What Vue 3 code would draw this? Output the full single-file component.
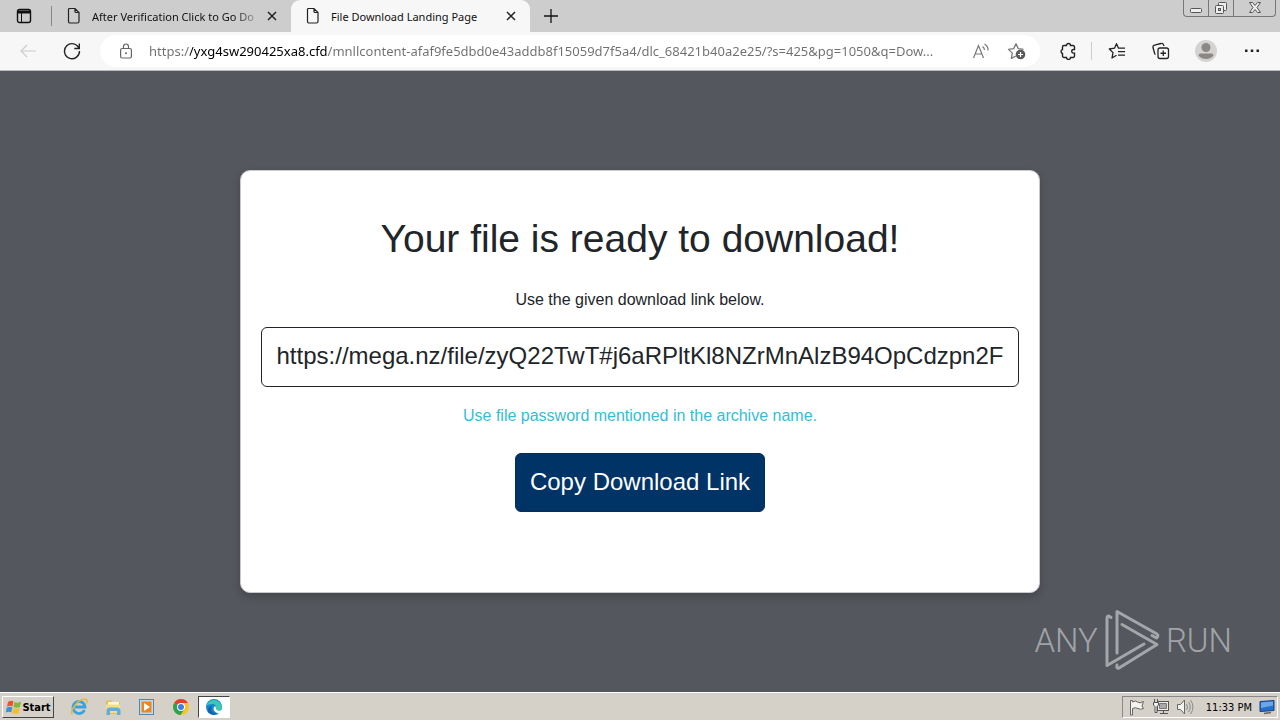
<script setup>
import { ref } from 'vue'

const tabs = [
  { title: 'After Verification Click to Go Do', active: false },
  { title: 'File Download Landing Page', active: true },
]
const address = ref('https://yxg4sw290425xa8.cfd/mnllcontent-afaf9fe5dbd0e43addb8f15059d7f5a4/dlc_68421b40a2e25/?s=425&pg=1050&q=Dow...')
const link = ref('https://mega.nz/file/zyQ22TwT#j6aRPltKl8NZrMnAlzB94OpCdzpn2F')
</script>

<template>
  <div class="desktop">
    <header class="tabstrip">
      <button class="tab-actions" aria-label="Tab actions">
        <svg width="16" height="16" viewBox="0 0 16 16"><rect x="1.5" y="1.500" width="13" height="13" rx="2" fill="none" stroke="#111" stroke-width="1.4" /><path d="M1.500 2.500h13v3h-13z" fill="#111" /><path d="M5.500 5v9" stroke="#111" /></svg>
      </button>
      <div v-for="tab in tabs" :key="tab.title" class="tab" :class="{ active: tab.active }">
        <svg class="doc" width="14" height="18" viewBox="0 0 14 18"><path d="M2.500 1.500h5.500l4 4v9a1.500 1.500 0 0 1-1.500 1.500h-8A1.500 1.500 0 0 1 1.500 14.500v-12a1 1 0 0 1 1-1zM8 1.500v3a1 1 0 0 0 1 1h3" fill="none" stroke="#222" stroke-width="1.200" /></svg>
        <span class="title">{{ tab.title }}</span>
        <button class="close" aria-label="Close tab"><svg width="10" height="10" viewBox="0 0 10 10"><path d="M1 1l8 8M9 1l-8 8" stroke="#222" stroke-width="1.500" /></svg></button>
      </div>
      <button class="new-tab" aria-label="New tab"><svg width="14" height="14" viewBox="0 0 14 14"><path d="M7 0v14M0 7h14" stroke="#111" stroke-width="1.300" /></svg></button>
      <div class="window-buttons">
        <button aria-label="Minimize"><svg width="14" height="14" viewBox="0 0 14 14"><rect x="1.500" y="7.500" width="11" height="4" rx="1" fill="#eee" stroke="#555" /></svg></button>
        <button aria-label="Restore"><svg width="14" height="14" viewBox="0 0 14 14"><rect x="4.500" y="1.500" width="8" height="8" rx="1" fill="#eee" stroke="#555" /><rect x="1.500" y="4.500" width="8" height="8" rx="1" fill="#eee" stroke="#555" /><rect x="4.500" y="7.500" width="2" height="2" fill="#ccc" stroke="#555" /></svg></button>
        <button class="wide" aria-label="Close"><svg width="14" height="14" viewBox="0 0 14 14"><path d="M1.500 1.500h3L7 4.500l2.500-3h3L9 6.500l3.500 5h-3L7 8.500l-2.500 3h-3L5 6.500z" fill="#eee" stroke="#555" /></svg></button>
      </div>
    </header>

    <nav class="toolbar">
      <button class="tool" aria-label="Back"><svg width="18" height="14" viewBox="0 0 18 14"><path d="M17 7H2M8 1L2 7l6 6" fill="none" stroke="#ccc" stroke-width="1.200" /></svg></button>
      <button class="tool" aria-label="Reload"><svg width="18" height="18" viewBox="0 0 18 18"><path d="M16 6.500A7.500 7.500 0 1 0 16.500 9M16.300 1.500v5h-5" fill="none" stroke="#222" stroke-width="1.400" /></svg></button>
      <div class="address">
        <svg width="12" height="16" viewBox="0 0 12 16"><rect x=".6" y="5.500" width="10.800" height="9.500" rx="1.500" fill="none" stroke="#666" stroke-width="1.200" /><path d="M3.500 5.500V3.500a2.500 2.500 0 0 1 5 0v2" fill="none" stroke="#666" stroke-width="1.200" /><circle cx="6" cy="10.300" r="1" fill="#666" /></svg>
        <input v-model="address" class="url" aria-label="Address" spellcheck="false" />
        <button aria-label="Read aloud"><svg width="18" height="16" viewBox="0 0 18 16"><path d="M1.500 15L6.500 2.500l5 12.500M3 11h7M10.500 3.500q2 1.500 2 3.500M12.500 1q4 2.500 3.500 6.500" fill="none" stroke="#777" stroke-width="1.200" /></svg></button>
        <button aria-label="Add to favorites"><svg width="20" height="18" viewBox="0 0 20 18"><path d="M9 14l-4.600 2.400.9-5.300L1.500 7.400l5.200-.8L9 1.800l2.300 4.800 5.200.8" fill="none" stroke="#777" stroke-width="1.300" stroke-linejoin="round" /><circle cx="13.500" cy="12.500" r="4.800" fill="#5a5a5a" /><path d="M13.500 10v5M11 12.500h5" stroke="#fff" stroke-width="1.200" /></svg></button>
      </div>
      <button class="tool ext" aria-label="Extensions"><svg width="18" height="18" viewBox="0 0 18 18"><path d="M5 3.500h2.500a2 2 0 0 1 4 0H14a1.500 1.500 0 0 1 1.500 1.500v2.500h-1a1.800 1.800 0 0 0 0 3.600h1V14a1.500 1.500 0 0 1-1.500 1.500h-2.500a2 2 0 0 1-4 0H5A1.500 1.500 0 0 1 3.500 14v-2.500a2.100 2.100 0 0 1 0-4V5A1.500 1.500 0 0 1 5 3.500z" fill="none" stroke="#222" stroke-width="1.400" /></svg></button>
      <span class="divider"></span>
      <button class="tool" aria-label="Favorites"><svg width="18" height="18" viewBox="0 0 18 18"><path d="M8.500 13.200L4 16l1-5.400L1.300 7l5.200-.8L8.500 1.700l2 4.500H17M10 9.700h7M10 13.200h7" fill="none" stroke="#222" stroke-width="1.300" stroke-linejoin="round" /></svg></button>
      <button class="tool" aria-label="Collections"><svg width="18" height="18" viewBox="0 0 18 18"><rect x="6" y="6" width="10.500" height="10.500" rx="2" fill="none" stroke="#222" stroke-width="1.300" /><path d="M11.250 8.500v5.500M8.500 11.250H14M3.500 12.500A2 2 0 0 1 2.500 11L1 5.500A2 2 0 0 1 2.500 3.200L9 1.500a2 2 0 0 1 2.500 1.300L12 4" fill="none" stroke="#222" stroke-width="1.300" /></svg></button>
      <button class="tool person" aria-label="Profile"><svg width="22" height="22" viewBox="0 0 22 22"><circle cx="11" cy="11" r="11" fill="#d5d3d1" /><circle cx="11" cy="7.500" r="4.500" fill="#8b8886" /><path d="M3.500 15.500q0-2 2-2h11q2 0 2 2a8.500 6.500 0 0 1-15 0z" fill="#8b8886" /></svg></button>
      <button class="tool person" aria-label="Settings and more"><svg width="16" height="4" viewBox="0 0 16 4"><path d="M1 .5h2.500v2.500H1zM6.750 .5h2.500v2.500h-2.500zM12.500 .5H15v2.500h-2.500z" fill="#222" /></svg></button>
    </nav>

    <main class="page">
      <section class="card">
        <h1>Your file is ready to download!</h1>
        <label for="link">Use the given download link below.</label>
        <input id="link" v-model="link" class="link" readonly />
        <p>Use file password mentioned in the archive name.</p>
        <button class="copy">Copy Download Link</button>
      </section>
      <div class="watermark">
        <span>ANY</span>
        <svg width="56" height="62" viewBox="0 0 56 62"><g fill="none" stroke="#a3a7aa" stroke-width="3" stroke-linejoin="round" stroke-linecap="round"><path d="M7 8.500Q3 5 3 10v46.500L40 35" /><path d="M13 44V2.500L53 25q2 2-.5 4L48 26.500" /><path d="M18 15.500L53 35.500 15 59q-3 1-2-3" /></g></svg>
        <span>RUN</span>
      </div>
    </main>

    <footer class="taskbar">
      <button class="start">
        <svg width="17" height="16" viewBox="0 0 17 16"><path d="M3 3q3-2 5.500-.5L7.500 7.500Q5 6 2 7.500z" fill="#e8562a" /><path d="M9.500 3Q13 4.500 16 2.500L15 8q-3 1.500-6.500 0z" fill="#7eb93c" /><path d="M1.800 8.500q3-1.500 5.500 0L6.300 13.500Q4 12 .8 13.500z" fill="#3c8fdd" /><path d="M8.300 9q3.500 1.500 6.500 0l-1 5q-3 2-6.500 0z" fill="#f5bf27" /></svg>
        Start
      </button>
      <div class="launchers">
        <button aria-label="Internet Explorer"><svg width="18" height="18" viewBox="0 0 18 18"><path d="M14.500 12A6 6 0 1 1 15 9H5" fill="none" stroke="#36a5df" stroke-width="2.800" /><path d="M2.500 16.500C-1 13 9-.5 16 1.500q2 1 .5 4" fill="none" stroke="#e6b83b" stroke-width="1.500" /></svg></button>
        <button aria-label="File Explorer"><svg width="18" height="18" viewBox="0 0 18 18"><path d="M2 3l5-1 1 2h8v12H2z" fill="#dfbf5b" /><path d="M4 4h11v3H4z" fill="#fff8cf" /><path d="M2 6.500h14V15H2z" fill="#f3dc8b" /><path d="M2.500 17v-4q0-3.500 3.500-3.500h7q3.500 0 3.500 3.500v4h-3.500v-4H6v4z" fill="#62aeda" /></svg></button>
        <button aria-label="Media Player"><svg width="18" height="18" viewBox="0 0 18 18"><rect x="1.500" y="1.500" width="14" height="15" fill="#bfdcf1" stroke="#4689bd" /><rect x="3.500" y="3.500" width="10" height="11" fill="#ef8519" /><path d="M6 5l6 4-6 4z" fill="#fff" /></svg></button>
        <button aria-label="Chrome"><svg width="18" height="18" viewBox="0 0 18 18"><circle cx="9" cy="9" r="8" fill="#f7c51e" /><path d="M9 9L2.100 5A8 8 0 0 1 16 5H9z" fill="#df4034" /><path d="M9 9L2.100 5A8 8 0 0 0 8.500 17L12.500 11z" fill="#2ca34c" /><circle cx="9" cy="9" r="4" fill="#fff" /><circle cx="9" cy="9" r="3" fill="#3f7de8" /></svg></button>
        <button class="pressed" aria-label="Edge"><svg width="18" height="18" viewBox="0 0 18 18"><circle cx="9" cy="9" r="8" fill="#1687cf" /><path d="M1.300 8A8 8 0 0 1 17 9q0 3.500-4 3.500-3 0-2.500-2Q12 6 7.500 6 3 6 1.300 8z" fill="#3fc6b0" /><path d="M7 8q-3 7 5 8A8 8 0 0 1 3 14Q2 9 7 8z" fill="#1761a9" /><path d="M9 8.500q1.500-.5 2 1-1 2 2 3 3 .5 5-1v2.500q-3 2-6 1Q7.500 13 9 8.500z" fill="#fff" /></svg></button>
      </div>
      <div class="tray">
        <svg width="18" height="18" viewBox="0 0 18 18"><path d="M2.500 17V2.500h2V4q3-2 5 0t6-.5L14 8l1.500 2.500q-3 1.500-5.500 0t-5.500 0V17z" fill="#f4f3ee" stroke="#666" /></svg>
        <svg width="18" height="18" viewBox="0 0 18 18"><rect x="5.500" y="3.500" width="11" height="9" fill="#eee" stroke="#555" /><path d="M7.500 5.500h7v5h-7z" fill="#aaa" stroke="#777" /><path d="M8 15.500h8M11.500 13v2" fill="none" stroke="#555" /><path d="M2.500 1v3M5.500 1v3M1.500 4.500h5V7L5 8.500v6H3v-6L1.500 7z" fill="#f4f3ee" stroke="#555" /></svg>
        <svg width="18" height="18" viewBox="0 0 18 18"><path d="M1.500 6.500h3l4-4.500v14l-4-4.500h-3z" fill="#f4f3ee" stroke="#666" /><path d="M10.500 6q2 3 0 6M12.500 4q3.500 5 0 10M14.500 2q5 7 0 14" fill="none" stroke="#888" /></svg>
        <time>11:33 PM</time>
        <svg width="18" height="16" viewBox="0 0 18 16"><path d="M2 2.500l14-1v10l-14 1z" fill="#2870c7" stroke="#153f83" /><path d="M3 3.500l12-1v4L3 9z" fill="#6aa7e8" /><path d="M6 14.500l7-1" stroke="#666" stroke-width="1.500" /></svg>
      </div>
    </footer>
  </div>
</template>

<style>
html, body, #app { height: 100%; }
body { margin: 0; overflow: hidden; }
</style>

<style scoped>
.desktop { display: flex; flex-direction: column; height: 100%; font-family: "Noto Sans", "Open Sans", sans-serif; color: #111; }
* { box-sizing: border-box; }
button { display: flex; align-items: center; justify-content: center; padding: 0; border: 0; background: none; font: inherit; color: inherit; }
svg { display: block; flex: none; }
.tabstrip { display: flex; flex: none; height: 32px; background: #cdcdcd; }
.tab-actions { width: 52px; padding-right: 4px; position: relative; }
.tab-actions::after { content: ""; position: absolute; right: 0; top: 6px; width: 1px; height: 20px; background: #888; }
.tab { display: flex; align-items: center; width: 239px; padding: 0 14px 0 15px; font-size: 11px; }
.tab.active { background: #f7f7f7; border-radius: 9px 9px 0 0; }
.title { flex: 1; min-width: 0; margin: 0 5px 0 11px; overflow: hidden; white-space: nowrap; }
.tab:not(.active) .title { mask-image: linear-gradient(to right, #000 84%, transparent); }
.close { width: 10px; height: 10px; }
.new-tab { width: 42px; }
.window-buttons { display: flex; height: 17px; margin: 0 4px 0 auto; border: 1px solid #777; border-top: 0; border-radius: 0 0 4px 4px; overflow: hidden; }
.window-buttons button { width: 25px; border-right: 1px solid #777; }
.window-buttons .wide { width: 41px; border: 0; }
.toolbar { display: flex; align-items: center; flex: none; height: 39px; padding: 0 5px 0 6px; background: #f7f7f7; border-bottom: 1px solid #bbb; }
.tool { width: 44px; height: 32px; }
.address { display: flex; align-items: center; flex: 1; min-width: 0; height: 32px; margin: 0 6px; padding: 0 5px 0 20px; border-radius: 16px; background: #fff; }
.url { flex: 1; min-width: 0; margin-left: 17px; padding: 0; border: 0; outline: 0; font: 13px "Noto Sans", "Open Sans", sans-serif; color: transparent; background: linear-gradient(to right, #6f6f6f 41px, #000 41px, #000 178px, #6f6f6f 178px); background-clip: text; }
.address button { width: 36px; height: 32px; }
.divider { width: 1px; height: 18px; margin: 0 3px 0 1px; background: #ccc; }
.person { width: 46px; }
.page { position: relative; display: flex; flex: 1; min-height: 0; align-items: flex-start; justify-content: center; padding-top: 99px; background: #54575d; font-family: "Liberation Sans", Arial, sans-serif; color: #212529; }
.card { display: flex; flex-direction: column; align-items: center; width: 800px; max-width: 100%; padding: 44px 20px 80px; border: 1px solid #c8c9ca; border-radius: 10px; background: #fff; box-shadow: 0 4px 8px rgba(0, 0, 0, .2); }
h1 { margin: 0 0 25px; font-size: 39px; font-weight: 400; line-height: 48px; }
label, p { font-size: 16px; line-height: 24px; }
.link { width: 100%; height: 60px; margin: 15px 0 17px; padding: 0 12px 2px; border: 1px solid #212529; border-radius: 6px; outline: 0; background: #fff; font: 24px "Liberation Sans", Arial, sans-serif; color: #212529; text-align: center; }
p { margin: 0 0 25px; color: #35bdd5; }
.copy { height: 59px; padding: 0 14px 2px; border: 1px solid #0a2d55; border-radius: 6px; background: #036; font-size: 24px; color: #fff; }
.watermark { position: absolute; right: 48px; bottom: 21px; display: flex; align-items: center; gap: 6px; font: 300 33px "Roboto", sans-serif; color: #a0a4a7; }
.taskbar { display: flex; align-items: center; flex: none; height: 28px; padding: 1px 2px 0; border-top: 1px solid #fff; background: #d5d1c9; font: 11px "DejaVu Sans Condensed", "DejaVu Sans", sans-serif; color: #000; }
.start { width: 52px; height: 22px; border: 1px solid; border-color: #fff #444 #444 #fff; font-weight: 700; }
.launchers { display: flex; align-items: center; margin-left: 8px; }
.launchers button { width: 34px; height: 22px; }
.launchers .pressed { width: 32px; border: 1px solid; border-color: #444 #fff #fff #444; background: #fff; }
.tray { display: flex; align-items: center; gap: 6px; height: 22px; margin-left: auto; padding: 0 1px 0 5px; border: 1px solid; border-color: #888 #fff #fff #888; }
.tray time { margin: 0 0 0 6px; }
</style>
